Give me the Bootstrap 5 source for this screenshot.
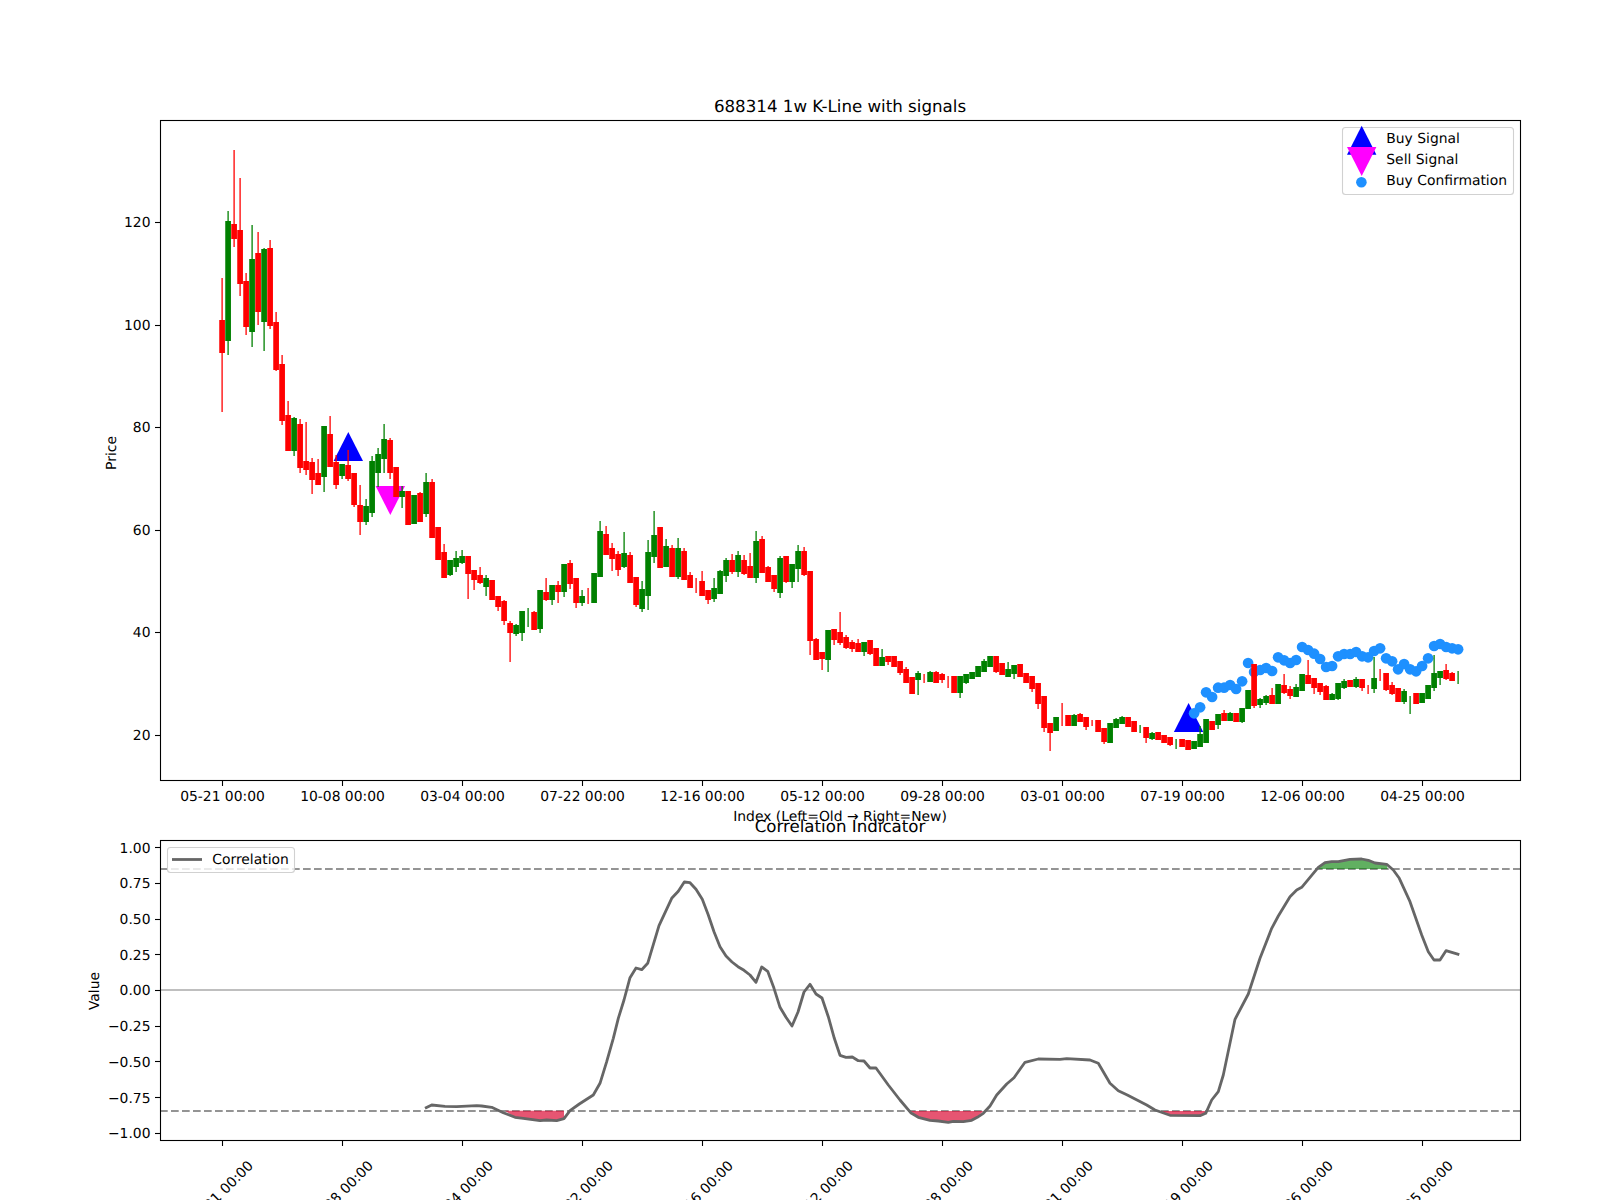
<!DOCTYPE html>
<html lang="en">
<head>
<meta charset="utf-8">
<title>688314 1w K-Line with signals</title>
<link href="https://cdn.jsdelivr.net/npm/bootstrap@5.3.0/dist/css/bootstrap.min.css" rel="stylesheet">
<style>
html,body{margin:0;background:#fff;}
.fig-wrap{width:1600px;height:1200px;overflow:hidden;}
.fig-wrap svg{display:block;}
.fig-wrap text{font-family:"DejaVu Sans",sans-serif;font-size:13.89px;fill:#000;text-rendering:geometricPrecision;}
.fig-wrap text.ttl{font-size:16.67px;}
.tk{stroke:#000;stroke-width:1.1;fill:none;}
.frame{stroke:#000;stroke-width:1.1;fill:none;}
.lg{fill:#fff;fill-opacity:.8;stroke:#ccc;stroke-opacity:.9;stroke-width:1.1;}
.end{text-anchor:end;}
.mid{text-anchor:middle;}
</style>
</head>
<body class="bg-white">
<main class="fig-wrap d-block">
<svg id="fig" xmlns="http://www.w3.org/2000/svg" width="1600" height="1200" viewBox="0 0 1600 1200">
  <defs>
    <clipPath id="ax1"><rect x="160" y="120" width="1360" height="660"/></clipPath>
    <clipPath id="ax2"><rect x="160" y="840" width="1360" height="300"/></clipPath>
  </defs>
  <g id="plot1" clip-path="url(#ax1)"></g>
  <rect class="frame" x="160.5" y="120.5" width="1360" height="660"/>
  <text class="ttl mid" x="840" y="112">688314 1w K-Line with signals</text>
  <g id="ticks1"></g>
  <g>
    <text class="mid" x="222.5" y="801">05-21 00:00</text>
    <text class="mid" x="342.5" y="801">10-08 00:00</text>
    <text class="mid" x="462.5" y="801">03-04 00:00</text>
    <text class="mid" x="582.5" y="801">07-22 00:00</text>
    <text class="mid" x="702.5" y="801">12-16 00:00</text>
    <text class="mid" x="822.5" y="801">05-12 00:00</text>
    <text class="mid" x="942.5" y="801">09-28 00:00</text>
    <text class="mid" x="1062.5" y="801">03-01 00:00</text>
    <text class="mid" x="1182.5" y="801">07-19 00:00</text>
    <text class="mid" x="1302.5" y="801">12-06 00:00</text>
    <text class="mid" x="1422.5" y="801">04-25 00:00</text>
  </g>
  <g>
    <text class="end" x="150.5" y="227.3">120</text>
    <text class="end" x="150.5" y="329.8">100</text>
    <text class="end" x="150.5" y="432.3">80</text>
    <text class="end" x="150.5" y="534.8">60</text>
    <text class="end" x="150.5" y="637.3">40</text>
    <text class="end" x="150.5" y="739.8">20</text>
  </g>
  <text class="mid" transform="translate(116 453) rotate(-90)">Price</text>
  <text class="mid" x="840" y="820.5">Index (Left=Old → Right=New)</text>

  <g id="legend1">
    <rect class="lg" x="1342.5" y="127.5" width="171" height="67" rx="3"/>
    <polygon points="1361.7,125.7 1347,154.7 1376.4,154.7" fill="#0000ff"/>
    <polygon points="1361.7,176 1347,147 1376.4,147" fill="#ff00ff"/>
    <circle cx="1361.4" cy="182.3" r="5.3" fill="#1e90ff"/>
    <text x="1386.3" y="143.3">Buy Signal</text>
    <text x="1386.3" y="164.3">Sell Signal</text>
    <text x="1386.3" y="185.3">Buy Confirmation</text>
  </g>

  <g id="plot2" clip-path="url(#ax2)"></g>
  <rect class="frame" x="160.5" y="840.5" width="1360" height="300"/>
  <text class="ttl mid" x="840" y="832">Correlation Indicator</text>
  <g id="ticks2"></g>
  <g>
    <text class="end" x="150.5" y="852.7">1.00</text>
    <text class="end" x="150.5" y="888.4">0.75</text>
    <text class="end" x="150.5" y="924">0.50</text>
    <text class="end" x="150.5" y="959.7">0.25</text>
    <text class="end" x="150.5" y="995.4">0.00</text>
    <text class="end" x="150.5" y="1031.1">−0.25</text>
    <text class="end" x="150.5" y="1066.8">−0.50</text>
    <text class="end" x="150.5" y="1102.5">−0.75</text>
    <text class="end" x="150.5" y="1138.2">−1.00</text>
  </g>
  <text class="mid" transform="translate(99 991) rotate(-90)">Value</text>
  <g>
    <text class="mid" transform="translate(224 1196.5) rotate(-45)">05-21 00:00</text>
    <text class="mid" transform="translate(344 1196.5) rotate(-45)">10-08 00:00</text>
    <text class="mid" transform="translate(464 1196.5) rotate(-45)">03-04 00:00</text>
    <text class="mid" transform="translate(584 1196.5) rotate(-45)">07-22 00:00</text>
    <text class="mid" transform="translate(704 1196.5) rotate(-45)">12-16 00:00</text>
    <text class="mid" transform="translate(824 1196.5) rotate(-45)">05-12 00:00</text>
    <text class="mid" transform="translate(944 1196.5) rotate(-45)">09-28 00:00</text>
    <text class="mid" transform="translate(1064 1196.5) rotate(-45)">03-01 00:00</text>
    <text class="mid" transform="translate(1184 1196.5) rotate(-45)">07-19 00:00</text>
    <text class="mid" transform="translate(1304 1196.5) rotate(-45)">12-06 00:00</text>
    <text class="mid" transform="translate(1424 1196.5) rotate(-45)">04-25 00:00</text>
  </g>
  <g id="legend2">
    <rect class="lg" x="167.5" y="847.5" width="127" height="25" rx="3"/>
    <line x1="172" y1="859.5" x2="202" y2="859.5" stroke="#666" stroke-width="2.8"/>
    <text x="212.3" y="864.3">Correlation</text>
  </g>
</svg>
</main>
<script src="https://cdn.jsdelivr.net/npm/bootstrap@5.3.0/dist/js/bootstrap.bundle.min.js"></script>
<script>
var C=[
['r',278,320,353,412],['g',211,221,341,355],['r',150,224,239,247],['r',178,230,284,296],['r',273,281,327,335],
['g',225,259,332,347],['r',232,253,312,325],['g',248,249,322,351],['r',240,248,326,329],['r',312,322,370,371],
['r',355,364,421,425],['r',401,415,451,451],['g',417,418,451,456],['r',419,424,468,473],['r',422,461,470,475],
['r',458,462,480,494],['r',459,473,485,485],['g',426,426,477,492],['r',416,434,467,467],['r',455,462,485,489],
['g',464,464,476,479],['r',450,465,479,481],['r',473,473,505,507],['r',485,505,522,535],['g',499,506,522,525],
['g',456,461,513,517],['g',448,454,473,487],['g',424,439,459,473],['r',438,440,473,479],['r',467,467,497,497],
['g',486,491,497,508],['r',491,491,525,525],['g',495,495,524,524],['r',492,493,522,522],['g',473,482,514,517],
['r',479,482,538,538],['r',527,527,560,560],['r',544,552,578,578],['g',560,560,575,576],['g',551,558,567,572],
['g',550,556,563,564],['r',556,556,574,599],['r',570,570,580,590],['r',567,575,583,584],['g',575,578,587,596],
['r',580,580,600,600],['r',596,596,607,611],['r',600,601,621,625],['r',621,623,633,662],['g',624,625,634,636],
['g',611,611,633,641],['g',608,0,0,627],['r',611,612,630,630],['g',590,590,629,633],['r',578,592,600,601],
['g',585,585,600,605],['r',581,585,592,603],['g',564,564,592,597],['r',560,563,584,589],['r',578,578,603,608],
['g',590,596,603,606],['r',588,0,0,604],['g',573,573,603,603],['g',521,531,577,577],['r',526,534,555,555],
['r',543,548,559,571],['r',551,554,570,576],['g',532,553,567,568],['r',552,555,583,583],['r',577,577,605,607],
['g',581,589,609,612],['g',540,552,596,610],['g',511,535,557,563],['r',527,527,568,568],['g',539,546,567,567],
['r',545,548,577,577],['g',538,548,577,579],['r',548,551,580,580],['r',572,575,588,588],['r',578,0,0,593],
['r',571,581,596,596],['r',590,590,600,604],['g',578,588,599,602],['g',570,571,594,594],['g',558,560,576,582],
['r',554,560,572,574],['g',551,555,572,577],['r',555,560,574,575],['r',553,566,578,578],['g',531,541,578,583],
['r',536,539,573,573],['r',566,567,582,582],['r',575,575,589,592],['g',556,558,593,598],['r',556,556,582,583],
['g',564,564,582,588],['g',545,551,569,582],['r',547,551,575,576],['r',571,571,641,655],['r',638,639,660,660],
['r',652,652,659,670],['g',630,630,660,672],['r',629,629,640,645],['r',612,632,643,645],['r',635,637,648,649],
['r',640,642,649,652],['r',639,643,652,652],['g',642,642,652,656],['r',640,640,654,655],['r',648,648,666,666],
['g',649,657,666,666],['r',656,656,662,665],['r',656,656,667,667],['r',661,661,673,675],['r',667,669,683,683],
['r',677,677,694,694],['g',671,673,680,695],['r',674,0,0,683],['g',671,672,682,682],['r',671,672,683,683],
['r',673,674,680,683],['r',676,0,0,688],['r',676,676,693,693],['g',676,676,693,698],['g',674,674,683,684],
['g',672,672,679,679],['g',666,666,677,677],['g',659,661,672,672],['g',656,656,667,667],['r',656,656,672,673],
['r',663,663,675,675],['g',662,669,677,677],['g',665,665,674,679],['r',664,664,677,677],['r',673,673,683,683],
['r',676,676,689,692],['r',683,683,704,709],['r',696,696,728,732],['r',723,723,733,751],['g',717,717,731,731],
['r',703,0,0,726],['r',715,715,726,726],['g',714,715,726,726],['r',713,714,722,722],['r',717,717,727,730],
['r',720,0,0,726],['r',720,720,732,732],['r',728,728,742,744],['g',723,723,743,743],['g',718,719,728,728],
['g',716,717,724,724],['r',717,717,727,727],['r',721,721,732,732],['g',725,0,0,733],['r',727,727,738,743],
['g',732,733,739,740],['r',732,732,740,740],['r',735,735,743,743],['r',737,737,745,746],['g',739,0,0,749],
['r',739,739,747,747],['r',740,740,750,750],['g',741,741,749,749],['g',726,734,747,747],['g',719,719,743,743],
['r',721,721,730,730],['g',714,714,725,729],['r',710,713,721,721],['g',712,713,721,721],['r',713,713,722,722],
['g',708,708,722,723],['g',690,690,709,709],['r',664,664,706,708],['g',698,699,705,708],['g',695,696,703,705],
['r',688,695,704,704],['g',684,684,704,704],['r',674,685,693,694],['r',686,689,696,699],['g',684,687,697,697],
['g',674,674,691,691],['r',660,675,684,684],['r',678,678,688,694],['r',683,683,692,695],['r',685,686,700,700],
['g',693,694,700,700],['g',683,683,699,700],['g',679,681,688,689],['r',680,680,687,687],['g',677,679,687,688],
['r',679,679,688,691],['r',685,0,0,694],['g',657,678,689,693],['r',669,0,0,681],['r',673,673,690,691],
['r',682,685,694,695],['r',688,688,702,702],['g',689,691,702,704],['g',696,0,0,714],['r',693,693,704,704],
['g',693,693,703,703],['g',685,685,699,699],['g',655,673,688,691],['g',671,671,678,685],['r',664,670,679,680],
['r',672,673,681,681],['g',671,0,0,684]
];
var D=[340,322,277,291,263,263,255,267,244,189,216,210,204,213,172,181,189,180,141,150,161,177,201,198,169,162,162,156,169,172,153,145,175,184,208,192,208,214,198,175,138,132,141,145,148];
var NS='http://www.w3.org/2000/svg';
function el(p,n,a){var e=document.createElementNS(NS,n);for(var k in a)e.setAttribute(k,a[k]);p.appendChild(e);return e;}
var X0=222.1,DX=6,TX=222.5;
var p1=document.getElementById('plot1');
// signals
el(p1,'polygon',{points:'348.3,432 333.6,461 363,461',fill:'#0000ff'});
el(p1,'polygon',{points:'390.3,515 375.6,486 405,486',fill:'#ff00ff'});
el(p1,'polygon',{points:'1188.6,703 1173.9,732 1203.3,732',fill:'#0000ff'});
// confirmations
D.forEach(function(z,k){el(p1,'circle',{cx:X0+DX*(162+k),cy:600+z/3,r:5.35,fill:'#1e90ff'});});
// candles
C.forEach(function(c,i){
  var x=X0+DX*i,col=c[0]==='r'?'#ff0000':'#008000';
  el(p1,'line',{x1:x,x2:x,y1:c[1],y2:c[4],stroke:col,'stroke-width':1.3});
  if(c[2]){el(p1,'rect',{x:x-2.85,width:5.7,y:c[2],height:Math.max(c[3]-c[2],1),fill:col});}
});
// ticks
var t1=document.getElementById('ticks1'),t2=document.getElementById('ticks2');
for(var i=0;i<=200;i+=20){
  var x=TX+DX*i;
  el(t1,'line',{'class':'tk',x1:x,x2:x,y1:781,y2:786});
  el(t2,'line',{'class':'tk',x1:x,x2:x,y1:1141,y2:1146});
}
[120,100,80,60,40,20].forEach(function(v){var y=Math.round(222.3+(120-v)*5.125)+.5;el(t1,'line',{'class':'tk',x1:155,x2:160,y1:y,y2:y});});
[1,.75,.5,.25,0,-.25,-.5,-.75,-1].forEach(function(v){var y=Math.round(990-v*142.7)+.5;el(t2,'line',{'class':'tk',x1:155,x2:160,y1:y,y2:y});});
// correlation
var p2=document.getElementById('plot2');
function mp(a,ox,oy){var r=[];for(var i=0;i<a.length;i+=2){r.push((ox+a[i]/3).toFixed(1)+','+(oy+a[i+1]/3).toFixed(1));}return r;}
var z6=[1035,1015,1055,1005,1095,1009,1130,1010,1190,1007,1205,1008,1235,1012,1270,1028,1305,1042,1330,1045,1380,1052,1400,1050,1430,1052,1452,1046,1470,1022,1498,1002];
var z7=[100,795,120,760,140,695,160,625,175,565,192,510,210,443,228,414,245,419,263,400,297,287,335,205,355,184,373,156,390,158,408,178,427,208,445,255,462,305,480,350,498,378,516,396,534,410,552,421,570,435,588,457,605,411,623,424,642,475,660,532,678,562,696,588,714,546,732,486,750,463,768,492,786,504,805,560,823,625,840,676,858,682,877,681,895,692,912,693,930,714,948,714,985,765,1020,810,1052,848,1075,862,1110,871,1135,873,1165,877,1180,874,1210,875,1235,871,1252,862,1270,850,1290,828,1310,795,1340,762,1362,743,1395,697,1435,687,1500,688];
var z8=[80,686,150,690,175,700,210,760,235,782,262,795,320,825,345,840,390,856,480,857,497,850,515,810,535,785,550,735,585,568,625,492,660,385,695,295,715,258,750,200,770,180,785,172,835,112,855,98,875,95,895,95,930,88,965,87,985,91,1005,99,1040,103,1060,120,1078,145,1110,215,1145,315,1165,365,1182,390,1200,390,1218,362,1258,374];
var line=[].concat(mp(z6,80,770),mp(z7,560,830),mp(z8,1040,830)).join(' ');
// zero + thresholds
el(p2,'line',{x1:160,x2:1520,y1:990,y2:990,stroke:'#aaaaaa','stroke-width':1.5});
[869,1111].forEach(function(y){el(p2,'line',{x1:160,x2:1520,y1:y,y2:y,stroke:'#949494','stroke-width':2,'stroke-dasharray':'7.7 3.3'});});
// fills
el(p2,'polygon',{points:mp([1275,1022,1305,1042,1330,1045,1380,1052,1400,1050,1430,1052,1452,1046,1452,1022],80,770).join(' '),fill:'#dc143c','fill-opacity':.72});
el(p2,'polygon',{points:mp([1052,843,1075,862,1110,871,1135,873,1165,877,1180,874,1210,875,1235,871,1252,862,1270,843],560,830).join(' '),fill:'#dc143c','fill-opacity':.72});
el(p2,'polygon',{points:mp([365,843,390,856,480,857,497,850,497,843],1040,830).join(' '),fill:'#dc143c','fill-opacity':.72});
el(p2,'polygon',{points:mp([835,117,835,112,855,98,875,95,895,95,930,88,965,87,985,91,1005,99,1040,103,1043,117],1040,830).join(' '),fill:'#008000','fill-opacity':.62});
el(p2,'polyline',{points:line,fill:'none',stroke:'#666','stroke-width':2.8,'stroke-linejoin':'round'});
</script>
</body>
</html>
